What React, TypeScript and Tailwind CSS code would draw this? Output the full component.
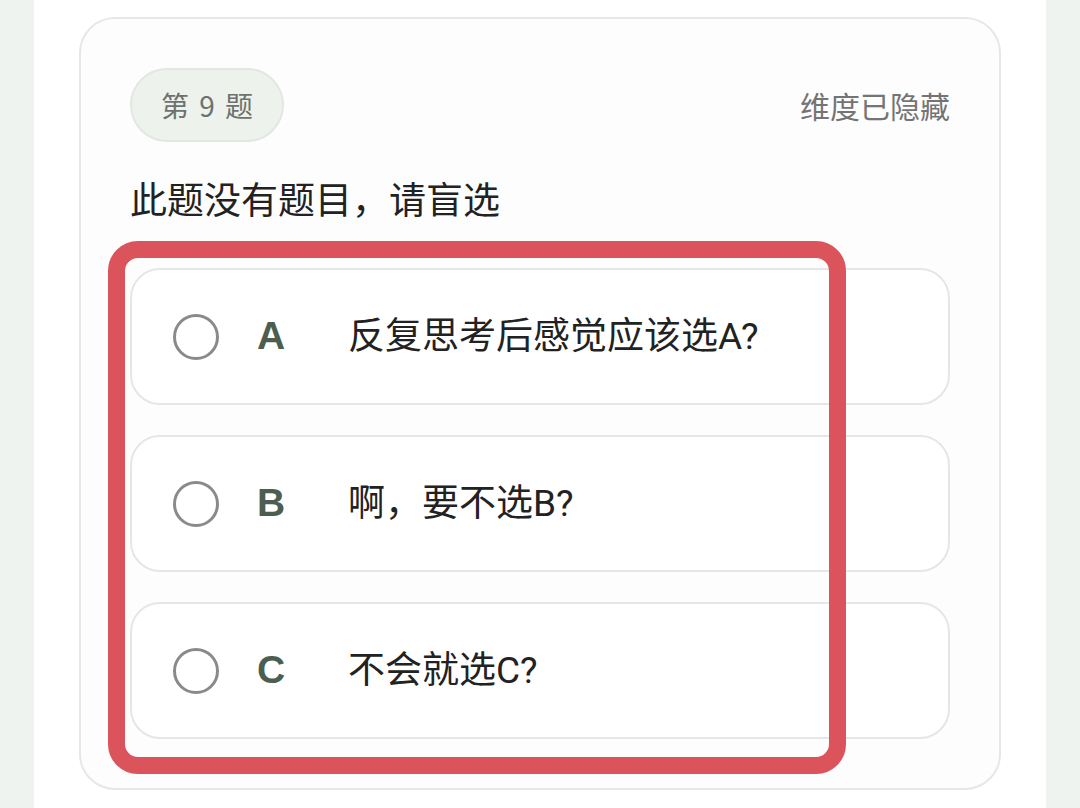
import React from "react";

const options = [
  { key: "A", text: "反复思考后感觉应该选A?" },
  { key: "B", text: "啊，要不选B?" },
  { key: "C", text: "不会就选C?" },
];

export default function App() {
  return (
    <div
      className="relative w-[1080px] h-[808px] overflow-hidden bg-[#eef3f0]"
      style={{ fontFamily: '"Noto Sans CJK SC", "Noto Sans", sans-serif' }}
    >
      <div className="mx-auto w-[1012px] h-full bg-white pt-[17px]">
        {/* question card */}
        <div className="mx-auto w-[922px] rounded-[36px] border-2 border-[#e6e8e6] bg-[#fdfdfd] px-[49px] pt-[49px] pb-[49px]">
          <div className="flex items-center justify-between">
            <div
              className="flex h-[74px] w-[154px] items-center justify-center rounded-full border-2 border-[#e1e7e1] bg-[#edf2ed] text-[28px] text-[#6e726e]"
              style={{ wordSpacing: "4px" }}
            >
              第 9 题
            </div>
            <div className="text-[30px] text-[#747474]">维度已隐藏</div>
          </div>

          <div className="mt-[30px] text-[37px] leading-[52px] text-[#222]">此题没有题目，请盲选</div>

          <div className="mt-[44px] flex flex-col gap-[30px]">
            {options.map((o) => (
              <div
                key={o.key}
                className="flex h-[137px] items-center rounded-[30px] border-2 border-[#e5e6e5] bg-white"
              >
                <div className="ml-[41px] h-[46px] w-[46px] rounded-full border-[3px] border-[#8a8a8a]" />
                <div
                  className="ml-[38px] w-[91px] text-[39px] font-bold text-[#4b5e50]"
                  style={{ fontFamily: '"Liberation Sans", Arial, sans-serif' }}
                >
                  {o.key}
                </div>
                <div
                  className="text-[37px] text-[#222]"
                  style={{ fontFamily: 'Roboto, "Noto Sans CJK SC", sans-serif' }}
                >
                  {o.text}
                </div>
              </div>
            ))}
          </div>
        </div>
      </div>

      {/* red annotation box */}
      <div className="absolute left-[108px] top-[241px] h-[533px] w-[738px] rounded-[30px] border-[17px] border-[#db535b]" />
    </div>
  );
}
